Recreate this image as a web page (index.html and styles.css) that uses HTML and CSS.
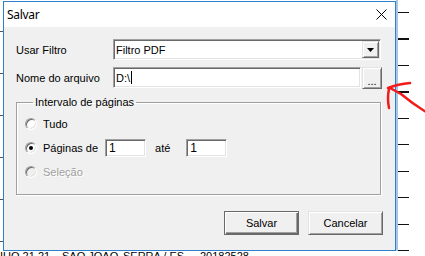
FILE: index.html
```html
<!DOCTYPE html>
<html lang="pt">
  <head>
    <meta charset="UTF-8" />
    <meta name="viewport" content="width=device-width, initial-scale=1.0" />
    <title>Salvar</title>
    <link rel="stylesheet" href="styles.css">
  </head>
  <body>
    <div class="desk">
      <div class="side side-left"></div>

      <div class="dialog">
        <div class="titlebar">
          <span class="title">Salvar</span>
          <svg class="close" width="11" height="11" viewBox="0 0 11 11">
            <path d="M0.5 0.5 L10.5 10.5 M10.5 0.5 L0.5 10.5" stroke="#000" stroke-width="1" />
          </svg>
        </div>

        <div class="content">
          <div class="row">
            <label class="label">Usar Filtro</label>
            <div class="combo sunken">
              <span class="value">Filtro PDF</span>
              <span class="combo-btn raised">
                <svg width="7" height="4" viewBox="0 0 7 4"><path d="M0 0 H7 L3.5 4 Z" fill="#000" /></svg>
              </span>
            </div>
          </div>

          <div class="row">
            <label class="label">Nome do arquivo</label>
            <div class="path">
              <div class="edit sunken"><span class="value">D:\</span><span class="caret"></span></div>
              <button class="dots raised">...</button>
            </div>
          </div>

          <fieldset class="group">
            <legend>Intervalo de páginas</legend>
            <div class="opt">
              <span class="radio"></span>
              <span>Tudo</span>
            </div>
            <div class="opt">
              <span class="radio checked"></span>
              <span>Páginas de</span>
              <div class="page sunken">1</div>
              <span class="ate">até</span>
              <div class="page sunken">1</div>
            </div>
            <div class="opt disabled">
              <span class="radio"></span>
              <span>Seleção</span>
            </div>
          </fieldset>

          <div class="actions">
            <button class="btn raised default">Salvar</button>
            <button class="btn raised">Cancelar</button>
          </div>
        </div>
      </div>

      <div class="side side-right">
        <div class="ticks"></div>
      </div>
    </div>

    <div class="under">
      <span class="cell c1">IUO 21 21</span>
      <span class="cell c2">SAO JOAO</span>
      <span class="cell c3">SERRA / ES</span>
      <span class="cell c4">20182528</span>
    </div>

    <svg class="arrow" width="425" height="256" viewBox="0 0 425 256">
      <path d="M426 112 Q413 104 401 94 L390 88" />
      <path d="M388 88 Q398 84 410 83" />
      <path d="M389 89 Q387 98 389 108" />
    </svg>
  </body>
</html>
```

FILE: styles.css
```css
body {
  margin: 0;
  height: 256px;
  overflow: hidden;
  background-color: #fff;
  font-family: "Liberation Sans", Arial, sans-serif;
  font-size: 11px;
  color: #000;
  position: relative;
}

.desk {
  display: flex;
  align-items: flex-start;
}

.side-left {
  width: 3px;
  height: 251px;
  background: repeating-linear-gradient(
    to bottom,
    transparent 0 31px,
    #555 31px 32px,
    transparent 32px 42px
  );
}

.side-right {
  flex: 1;
  height: 251px;
  border-left: 2px solid #a9c6e2;
}

.ticks {
  width: 11px;
  height: 251px;
  background: repeating-linear-gradient(
    to bottom,
    transparent 0 12px,
    #111 12px 13px,
    transparent 13px 26.5px
  );
}

/* dialog window */

.dialog {
  width: 393px;
  height: 250px;
  margin-top: 1px;
  box-sizing: border-box;
  border: 1px solid #2f7fcb;
  background-color: #f0f0f0;
}

.titlebar {
  height: 25px;
  background-color: #fff;
  display: flex;
  align-items: center;
  justify-content: space-between;
  padding: 0 8px 0 3px;
}

.title {
  font-family: "Noto Sans", sans-serif;
  font-size: 12px;
  letter-spacing: -0.3px;
}

.content {
  padding: 12px 12px 0 12px;
}

.row {
  display: flex;
  align-items: center;
}

.row + .row {
  margin-top: 7px;
}

.label {
  width: 97px;
}

/* 3d borders */

.sunken {
  box-sizing: border-box;
  border: 1px solid;
  border-color: #a0a0a0 #fff #fff #a0a0a0;
  box-shadow: inset 1px 1px 0 #696969, inset -1px -1px 0 #e3e3e3;
  background-color: #fff;
  padding: 1px;
}

.raised {
  box-sizing: border-box;
  border: 1px solid;
  border-color: #e3e3e3 #696969 #696969 #e3e3e3;
  box-shadow: inset 1px 1px 0 #fff, inset -1px -1px 0 #a0a0a0;
  background-color: #f0f0f0;
}

.combo {
  width: 268px;
  height: 21px;
  display: flex;
  align-items: center;
  justify-content: space-between;
}

.value {
  padding-left: 1px;
}

.combo-btn {
  width: 17px;
  height: 17px;
  display: flex;
  align-items: center;
  justify-content: center;
  padding-top: 1px;
}

.path {
  display: flex;
  gap: 1px;
}

.edit {
  width: 248px;
  height: 21px;
  display: flex;
  align-items: center;
}

.caret {
  width: 1px;
  height: 13px;
  margin-left: 1px;
  background-color: #000;
}

.dots {
  width: 20px;
  height: 22px;
  margin: 0;
  padding: 5px 0 0;
  font-family: inherit;
  font-size: 11px;
  color: #000;
}

/* page range group */

.group {
  width: 365px;
  margin: 7px 0 0;
  padding: 3px 0 10px 8px;
  box-sizing: border-box;
  border: 1px solid #a0a0a0;
  box-shadow: 1px 1px 0 #fff, inset 1px 1px 0 #fff;
}

.group legend {
  margin-left: 8px;
  padding: 0 2px;
  line-height: 13px;
}

.opt {
  height: 24px;
  display: flex;
  align-items: center;
}

.radio {
  width: 12px;
  height: 12px;
  box-sizing: border-box;
  margin-right: 6px;
  border-radius: 50%;
  border: 1px solid;
  border-color: #a0a0a0 #fff #fff #a0a0a0;
  box-shadow: inset 1px 1px 0 #696969, inset -1px -1px 0 #e3e3e3;
  background-color: #fff;
  position: relative;
}

.radio.checked::after {
  content: "";
  position: absolute;
  left: 3px;
  top: 3px;
  width: 4px;
  height: 4px;
  border-radius: 50%;
  background-color: #000;
}

.opt.disabled {
  color: #a0a0a0;
  text-shadow: 1px 1px 0 #fff;
}

.opt.disabled .radio {
  background-color: #f0f0f0;
}

.page {
  width: 41px;
  height: 18px;
  margin-left: 7px;
  padding-left: 3px;
  font-size: 12px;
  line-height: 14px;
}

.ate {
  margin: 0 9px;
}

/* buttons */

.actions {
  margin-top: 16px;
  display: flex;
  justify-content: flex-end;
  gap: 9px;
}

.btn {
  width: 75px;
  height: 24px;
  margin: 0;
  padding: 0;
  font-family: inherit;
  font-size: 11px;
  color: #000;
}

.btn.default {
  border-color: #696969;
  box-shadow: inset 1px 1px 0 #fff, inset -1px -1px 0 #696969, inset -2px -2px 0 #a0a0a0;
}

/* window underneath */

.under {
  display: flex;
  line-height: 10px;
  white-space: nowrap;
}

.cell.c1 { width: 62px; }
.cell.c2 { width: 61px; }
.cell.c3 { width: 77px; }

.arrow {
  position: absolute;
  left: 0;
  top: 0;
  pointer-events: none;
}

.arrow path {
  fill: none;
  stroke: #f21b1b;
  stroke-width: 2.5;
  stroke-linecap: round;
  stroke-linejoin: round;
}
```
